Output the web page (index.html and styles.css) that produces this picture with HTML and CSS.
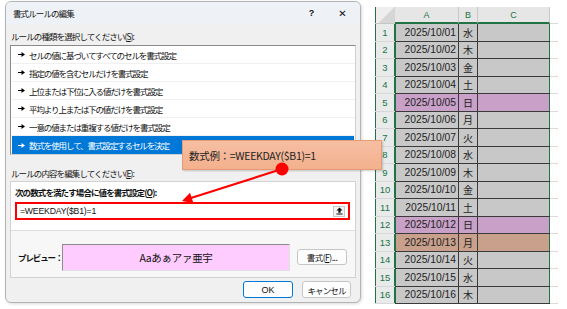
FILE: index.html
```html
<!DOCTYPE html>
<html lang="ja">
<head>
    <meta charset="UTF-8">
    <title>書式ルールの編集</title>
    <link rel="stylesheet" href="styles.css">
</head>
<body>
    <div class="page">
        <div class="dialog">
            <div class="titlebar">
                <span class="title">書式ルールの編集</span>
                <span class="tb-help">?</span>
                <span class="tb-close">✕</span>
            </div>
            <div class="dialog-body">
                <div class="label">ルールの種類を選択してください(<u>S</u>):</div>
                <ul class="rule-list">
                    <li><svg class="bullet" viewBox="0 0 7 5"><path d="M0 2.5H4" stroke="#000" stroke-width="1.2"/><path d="M3.5 0L7 2.5L3.5 5Z" fill="#000"/></svg>セルの値に基づいてすべてのセルを書式設定</li>
                    <li><svg class="bullet" viewBox="0 0 7 5"><path d="M0 2.5H4" stroke="#000" stroke-width="1.2"/><path d="M3.5 0L7 2.5L3.5 5Z" fill="#000"/></svg>指定の値を含むセルだけを書式設定</li>
                    <li><svg class="bullet" viewBox="0 0 7 5"><path d="M0 2.5H4" stroke="#000" stroke-width="1.2"/><path d="M3.5 0L7 2.5L3.5 5Z" fill="#000"/></svg>上位または下位に入る値だけを書式設定</li>
                    <li><svg class="bullet" viewBox="0 0 7 5"><path d="M0 2.5H4" stroke="#000" stroke-width="1.2"/><path d="M3.5 0L7 2.5L3.5 5Z" fill="#000"/></svg>平均より上または下の値だけを書式設定</li>
                    <li><svg class="bullet" viewBox="0 0 7 5"><path d="M0 2.5H4" stroke="#000" stroke-width="1.2"/><path d="M3.5 0L7 2.5L3.5 5Z" fill="#000"/></svg>一意の値または重複する値だけを書式設定</li>
                    <li class="selected"><svg class="bullet" viewBox="0 0 7 5"><path d="M0 2.5H4" stroke="#fff" stroke-width="1.2"/><path d="M3.5 0L7 2.5L3.5 5Z" fill="#fff"/></svg>数式を使用して、書式設定するセルを決定</li>
                </ul>

                <div class="label label-edit">ルールの内容を編集してください(<u>E</u>):</div>
                <div class="rule-box">
                    <div class="formula-part">
                        <div class="formula-label">次の数式を満たす場合に値を書式設定(<u>O</u>):</div>
                        <div class="formula-input">
                            <span class="formula-text">=WEEKDAY($B1)=1</span>
                            <span class="ref-btn"><svg viewBox="0 0 8 9"><path d="M4 0.5L7.5 4H5.3V6.5H2.7V4H0.5Z" fill="#111"/><path d="M0.5 8H7.5" stroke="#111" stroke-width="1.2"/></svg></span>
                        </div>
                    </div>
                    <div class="preview-part">
                        <span class="preview-label">プレビュー：</span>
                        <div class="preview">Aaあぁアァ亜宇</div>
                        <button class="btn btn-format">書式(<u>F</u>)...</button>
                    </div>
                </div>

                <div class="footer">
                    <button class="btn btn-ok">OK</button>
                    <button class="btn btn-cancel">キャンセル</button>
                </div>
            </div>
        </div>

        <div class="sheet">
            <div class="hd corner"></div>
            <div class="hd col">A</div>
            <div class="hd col">B</div>
            <div class="hd col">C</div>
            <div class="hd-rest"></div>

            <div class="rh">1</div><div class="cell a">2025/10/01</div><div class="cell b">水</div><div class="cell c"></div><div class="rest"></div>
            <div class="rh">2</div><div class="cell a">2025/10/02</div><div class="cell b">木</div><div class="cell c"></div><div class="rest"></div>
            <div class="rh">3</div><div class="cell a">2025/10/03</div><div class="cell b">金</div><div class="cell c"></div><div class="rest"></div>
            <div class="rh">4</div><div class="cell a">2025/10/04</div><div class="cell b">土</div><div class="cell c"></div><div class="rest"></div>
            <div class="rh">5</div><div class="cell a sun">2025/10/05</div><div class="cell b sun">日</div><div class="cell c sun"></div><div class="rest"></div>
            <div class="rh">6</div><div class="cell a">2025/10/06</div><div class="cell b">月</div><div class="cell c"></div><div class="rest"></div>
            <div class="rh">7</div><div class="cell a">2025/10/07</div><div class="cell b">火</div><div class="cell c"></div><div class="rest"></div>
            <div class="rh">8</div><div class="cell a">2025/10/08</div><div class="cell b">水</div><div class="cell c"></div><div class="rest"></div>
            <div class="rh">9</div><div class="cell a">2025/10/09</div><div class="cell b">木</div><div class="cell c"></div><div class="rest"></div>
            <div class="rh">10</div><div class="cell a">2025/10/10</div><div class="cell b">金</div><div class="cell c"></div><div class="rest"></div>
            <div class="rh">11</div><div class="cell a">2025/10/11</div><div class="cell b">土</div><div class="cell c"></div><div class="rest"></div>
            <div class="rh">12</div><div class="cell a sun">2025/10/12</div><div class="cell b sun">日</div><div class="cell c sun"></div><div class="rest"></div>
            <div class="rh">13</div><div class="cell a hol">2025/10/13</div><div class="cell b hol">月</div><div class="cell c hol"></div><div class="rest"></div>
            <div class="rh">14</div><div class="cell a">2025/10/14</div><div class="cell b">火</div><div class="cell c"></div><div class="rest"></div>
            <div class="rh">15</div><div class="cell a">2025/10/15</div><div class="cell b">水</div><div class="cell c"></div><div class="rest"></div>
            <div class="rh">16</div><div class="cell a">2025/10/16</div><div class="cell b">木</div><div class="cell c"></div><div class="rest"></div>
        </div>
    </div>

    <!-- annotation laid over the screenshot -->
    <div class="callout">数式例：=WEEKDAY($B1)=1</div>
    <svg class="pointer" viewBox="0 0 567 309">
        <line x1="282" y1="169" x2="191" y2="198" stroke="#ff0000" stroke-width="2.2"/>
        <polygon points="182,201 193.5,203.2 190,192.8" fill="#ff0000"/>
        <circle cx="282" cy="169" r="6.5" fill="#ff0000"/>
    </svg>
</body>
</html>
```

FILE: styles.css
```css
* {
    margin: 0;
    padding: 0;
    box-sizing: border-box;
}

body {
    width: 567px;
    height: 309px;
    overflow: hidden;
    background: #fff;
    font-family: "Noto Sans CJK JP", "Liberation Sans", sans-serif;
    color: #111;
    position: relative;
}

.page {
    display: flex;
    align-items: flex-start;
    padding: 1px 0 0 5px;
}

/* ---------- dialog ---------- */

.dialog {
    width: 356px;
    height: 302px;
    background: #f0f0f0;
    border: 1px solid #b4b4b4;
    border-radius: 6px;
    overflow: hidden;
    box-shadow: 1px 1px 3px rgba(0, 0, 0, 0.15);
}

.titlebar {
    height: 22px;
    background: #eef2f7;
    display: flex;
    align-items: center;
    padding: 0 0 0 7px;
    font-size: 8.5px;
    letter-spacing: -0.9px;
}

.title {
    flex: 1;
}

.tb-help {
    width: 31px;
    text-align: center;
    font-family: "Liberation Sans", sans-serif;
    font-weight: bold;
    font-size: 9px;
    letter-spacing: 0;
}

.tb-close {
    width: 31px;
    margin-right: 2px;
    text-align: center;
    font-family: "DejaVu Sans", sans-serif;
    font-size: 10px;
    letter-spacing: 0;
}

.dialog-body {
    padding: 6px 4px 0 4px;
}

.label {
    font-size: 8.5px;
    line-height: 13px;
    letter-spacing: -0.9px;
    padding-left: 1px;
}

.label u,
.formula-label u,
.btn u {
    text-underline-offset: 1px;
}

.rule-list {
    list-style: none;
    margin-top: 2px;
    background: #fff;
    border: 1px solid #8a8a8a;
    border-right-color: #d0d0d0;
    border-bottom-color: #d0d0d0;
}

.rule-list li {
    height: 18px;
    display: flex;
    align-items: center;
    padding-left: 7px;
    font-size: 8.5px;
    letter-spacing: -1.1px;
    border-bottom: 1px solid #f0f0f0;
}

.rule-list li:last-child {
    border-bottom: none;
}

.rule-list li.selected {
    background: #0078d7;
    color: #fff;
    margin: 0 1px 0 1px;
    padding-left: 6px;
}

.bullet {
    width: 7px;
    height: 5px;
    margin-right: 4px;
    flex-shrink: 0;
}

.label-edit {
    margin-top: 12px;
}

.rule-box {
    margin-top: 1px;
    height: 97px;
    border: 1px solid #d2d2d2;
    background: #fff;
}

.formula-part {
    padding: 4px 5px 0 4px;
    height: 49px;
    border-bottom: 1px solid #dcdcdc;
}

.formula-label {
    font-size: 8.5px;
    line-height: 13px;
    font-weight: bold;
    letter-spacing: -0.9px;
}

.formula-input {
    margin-top: 3px;
    height: 18px;
    border: 2px solid #ff0000;
    background: #fff;
    display: flex;
    align-items: center;
    justify-content: space-between;
    padding: 0 3px 0 3px;
}

.formula-text {
    font-family: "Liberation Sans", sans-serif;
    font-size: 8.7px;
    letter-spacing: -0.2px;
}

.ref-btn {
    width: 12px;
    height: 11px;
    border: 1px solid #c8c8c8;
    background: #f4f4f4;
    display: flex;
    align-items: center;
    justify-content: center;
}

.ref-btn svg {
    width: 7px;
    height: 8px;
}

.preview-part {
    display: flex;
    align-items: flex-start;
    padding: 13px 0 0 7px;
    background: #f7f7f7;
    height: 46px;
}

.preview-label {
    width: 44px;
    flex-shrink: 0;
    white-space: nowrap;
    line-height: 27px;
    font-size: 8.5px;
    font-weight: bold;
    letter-spacing: -1.1px;
}

.preview {
    width: 228px;
    height: 27px;
    flex-shrink: 0;
    background: #ffccff;
    border: 1px solid #8c8c8c;
    border-right-color: #e0e0e0;
    border-bottom-color: #e0e0e0;
    display: flex;
    align-items: center;
    justify-content: center;
    font-size: 10.5px;
    letter-spacing: -0.3px;
}

.btn {
    height: 17px;
    padding: 0;
    white-space: nowrap;
    background: #fdfdfd;
    border: 1px solid #c6c6c6;
    border-radius: 3px;
    font-family: "Noto Sans CJK JP", "Liberation Sans", sans-serif;
    font-size: 8.5px;
    letter-spacing: -0.9px;
    color: #111;
}

.btn-format {
    width: 50px;
    height: 16px;
    flex-shrink: 0;
    margin: 5px 0 0 7px;
    letter-spacing: -0.5px;
}

.footer {
    display: flex;
    justify-content: flex-end;
    gap: 9px;
    margin-top: 3px;
    padding-right: 5px;
}

.btn-ok {
    width: 50px;
    border: 1px solid #0078d7;
    font-family: "Liberation Sans", sans-serif;
    font-size: 9px;
    letter-spacing: 0;
}

.btn-cancel {
    width: 49px;
}

/* ---------- spreadsheet ---------- */

.sheet {
    margin: 6px 0 0 14px;
    display: grid;
    grid-template-columns: 20px 64px 19px 72px 8px;
    grid-template-rows: 17px repeat(16, 17.5px);
    font-family: "Liberation Sans", sans-serif;
    font-size: 10.3px;
    color: #222;
}

.hd {
    background: #eeeeee;
    border-right: 1px solid #d4d4d4;
    border-bottom: 1px solid #c6c6c6;
    display: flex;
    align-items: center;
    justify-content: center;
    color: #217346;
    font-size: 9px;
}

.hd.col {
    background: #e6e6e6;
    border-bottom: 2px solid #217346;
    border-right-color: #c8c8c8;
}

.corner {
    background: linear-gradient(135deg, #eeeeee 55%, #d6d6d6 55%);
    box-shadow: inset 1px 0 #217346;
}

.hd-rest {
    border-bottom: 1px solid #dadada;
}

.rh {
    background: #e8ebe9;
    border-bottom: 1px solid #d8d8d8;
    box-shadow: inset 1px 0 #217346, inset -1px 0 #217346;
    color: #217346;
    display: flex;
    align-items: center;
    justify-content: center;
    font-size: 9.5px;
}

.cell {
    background: #c8c8c8;
    border-bottom: 1px solid #3a3a3a;
    border-right: 1px solid #3a3a3a;
    display: flex;
    align-items: center;
}

.cell.a {
    justify-content: flex-end;
    padding-right: 2px;
    box-shadow: inset 1px 0 #217346;
}

.cell.b {
    justify-content: center;
    font-family: "Noto Sans CJK JP", sans-serif;
    font-size: 10px;
}

.cell.c {
    border-right: none;
    box-shadow: inset -1px 0 #217346;
}

.cell.sun {
    background: #c8a0c8;
}

.cell.hol {
    background: #c8a08c;
}

.rest {
    border-bottom: 1px solid #dadada;
}

/* ---------- annotation ---------- */

.callout {
    position: absolute;
    left: 182px;
    top: 140px;
    width: 200px;
    height: 30px;
    background: linear-gradient(180deg, #f6bfa3 0%, #f3b08d 100%);
    border: 1px solid #e59b77;
    box-shadow: 1px 1px 2px rgba(0, 0, 0, 0.2);
    display: flex;
    align-items: center;
    padding-left: 6px;
    font-size: 10.5px;
    letter-spacing: -0.3px;
    color: #222;
}

.pointer {
    position: absolute;
    left: 0;
    top: 0;
    width: 567px;
    height: 309px;
    pointer-events: none;
}
```
